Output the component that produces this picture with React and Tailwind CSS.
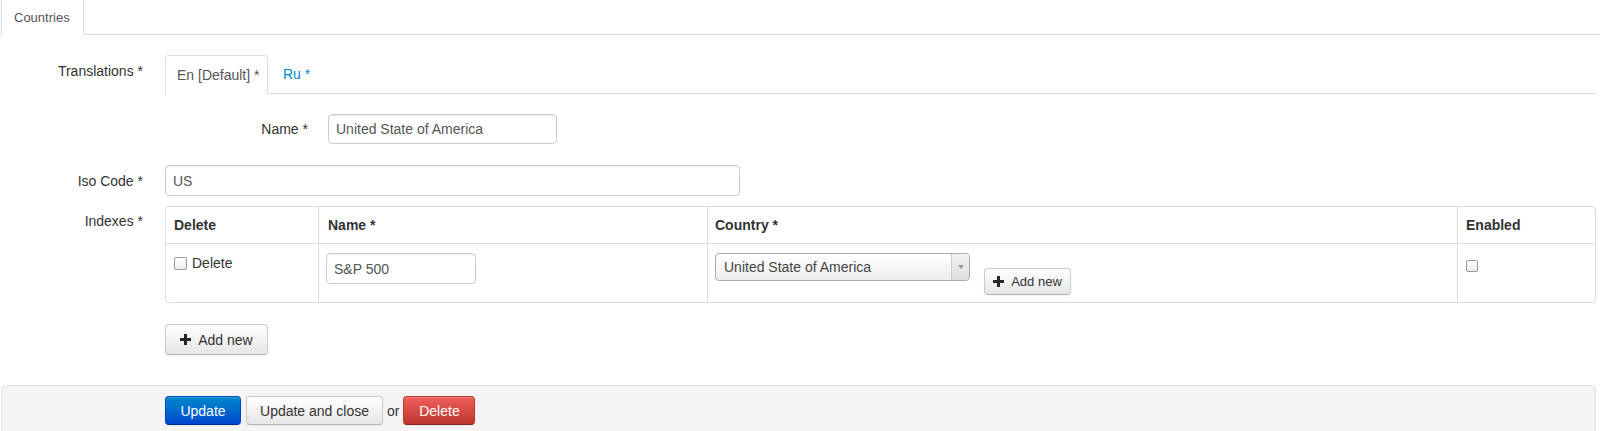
import React from "react";

const PlusIcon = ({ size = 11 }) => (
  <svg width={size} height={size} viewBox="0 0 11 11" className="shrink-0">
    <rect x="4" y="0" width="3" height="11" fill="#262626" />
    <rect x="0" y="4" width="11" height="3" fill="#262626" />
  </svg>
);

const Checkbox = () => (
  <span className="inline-block w-[13px] h-[13px] shrink-0 rounded-[2px] border border-[#9a9a9a] bg-linear-to-b from-white to-[#ededed]" />
);

const btnBase =
  "inline-flex items-center justify-center rounded-[4px] border shadow-[inset_0_1px_0_rgba(255,255,255,0.2),0_1px_2px_rgba(0,0,0,0.05)]";
const btnDefault =
  "bg-linear-to-b from-white to-[#e6e6e6] border-[#cccccc] border-b-[#b3b3b3] text-[#333]";

const inputCls =
  "flex items-center rounded-[4px] border border-[#cccccc] bg-white px-[7px] text-[14px] text-[#555] shadow-[inset_0_1px_1px_rgba(0,0,0,0.075)]";

const Label = ({ children, className = "" }) => (
  <div className={`w-[143px] shrink-0 text-right text-[#333] ${className}`}>{children}</div>
);

const App = () => {
  return (
    <div className="w-[1600px] h-[431px] overflow-hidden bg-white font-['Liberation_Sans',Arial,sans-serif] text-[14px] leading-[20px] text-[#333]">
      {/* top tabs */}
      <div className="flex h-[35px] border-b border-[#dddddd]">
        <div className="ml-px -mb-px flex h-[35px] w-[83px] items-center border-x border-[#dddddd] bg-white pl-[12px] text-[13px] text-[#555]">
          Countries
        </div>
      </div>

      <div className="pr-[4px]">
        {/* Translations */}
        <div className="mt-[20px] flex">
          <Label className="pt-[6px]">Translations *</Label>
          <div className="ml-[22px] flex-1">
            <div className="flex h-[39px] border-b border-[#dddddd]">
              <div className="-mb-px flex h-[39px] w-[103px] items-center rounded-t-[4px] border-x border-t border-[#dddddd] bg-white pl-[11px] text-[#555]">
                En [Default] *
              </div>
              <div className="ml-[2px] flex items-center px-[13px] text-[#0088cc]">Ru *</div>
            </div>
            <div className="pt-[20px] flex items-center">
              <Label>Name *</Label>
              <div className={`${inputCls} ml-[20px] h-[30px] w-[229px]`}>United State of America</div>
            </div>
          </div>
        </div>

        {/* Iso code */}
        <div className="mt-[21px] flex items-center">
          <Label>Iso Code *</Label>
          <div className={`${inputCls} ml-[22px] h-[31px] w-[575px]`}>US</div>
        </div>

        {/* Indexes */}
        <div className="mt-[10px] flex">
          <Label className="pt-[5px]">Indexes *</Label>
          <div className="ml-[22px] flex-1">
            <div className="rounded-[4px] border border-[#dddddd]">
              <div className="grid h-[37px] grid-cols-[152px_389px_750px_1fr] border-b border-[#dddddd] font-bold text-[#333]">
                <div className="flex items-center px-[8px]">Delete</div>
                <div className="flex items-center border-l border-[#dddddd] px-[9px]">Name *</div>
                <div className="flex items-center border-l border-[#dddddd] px-[7px]">Country *</div>
                <div className="flex items-center border-l border-[#dddddd] px-[8px]">Enabled</div>
              </div>
              <div className="grid h-[58px] grid-cols-[152px_389px_750px_1fr]">
                <div className="flex items-center gap-[5px] self-start px-[8px] pt-[9px] h-[29px]">
                  <Checkbox />
                  <span>Delete</span>
                </div>
                <div className="border-l border-[#dddddd] px-[7px] pt-[9px]">
                  <div className={`${inputCls} h-[31px] w-[150px]`}>S&amp;P 500</div>
                </div>
                <div className="flex items-start border-l border-[#dddddd] px-[7px] pt-[9px]">
                  <div className="flex h-[28px] w-[255px] overflow-hidden rounded-[4px] border border-[#aaaaaa] bg-linear-to-b from-white to-[#eeeeee]">
                    <div className="flex flex-1 items-center pl-[8px] text-[#444]">United State of America</div>
                    <div className="flex w-[18px] items-center justify-center border-l border-[#cccccc] bg-linear-to-b from-[#f2f2f2] to-[#dddddd]">
                      <svg width="6" height="4" viewBox="0 0 6 4">
                        <path d="M0 0 L6 0 L3 4 Z" fill="#9a9a9a" />
                      </svg>
                    </div>
                  </div>
                  <button
                    className={`${btnBase} ${btnDefault} ml-[14px] mt-[15px] h-[27px] w-[87px] gap-[7px] text-[13px]`}
                  >
                    <PlusIcon />
                    <span>Add new</span>
                  </button>
                </div>
                <div className="border-l border-[#dddddd] pl-[8px] pt-[16px]">
                  <span className="block w-[12px] h-[12px] rounded-[2px] border border-[#9a9a9a] bg-linear-to-b from-white to-[#ededed]" />
                </div>
              </div>
            </div>
          </div>
        </div>

        {/* Add new */}
        <div className="mt-[21px] pl-[165px]">
          <button
            className={`${btnBase} ${btnDefault} h-[31px] w-[103px] gap-[7px] text-[14px]`}
          >
            <PlusIcon />
            <span>Add new</span>
          </button>
        </div>
      </div>

      {/* actions */}
      <div className="ml-px mr-[4px] mt-[30px] h-[60px] rounded-t-[4px] border border-[#e3e3e3] bg-[#f4f4f4] pl-[163px] pt-[10px]">
        <div className="flex items-center">
          <button className={`${btnBase} h-[29px] w-[76px] border-[#0044cc] border-b-[#002a80] bg-linear-to-b from-[#0088cc] to-[#0044cc] text-white`}>
            Update
          </button>
          <button className={`${btnBase} ${btnDefault} ml-[5px] h-[29px] w-[137px]`}>Update and close</button>
          <span className="mx-[4px] text-[#333]">or</span>
          <button className={`${btnBase} h-[29px] w-[72px] border-[#bd362f] border-b-[#802420] bg-linear-to-b from-[#ee5f5b] to-[#bd362f] text-white`}>
            Delete
          </button>
        </div>
      </div>
    </div>
  );
};

export default App;
